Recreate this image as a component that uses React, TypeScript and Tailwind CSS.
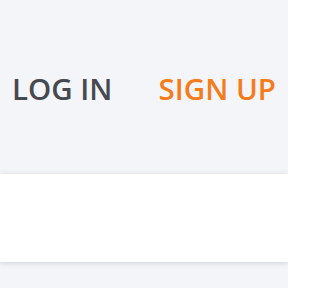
import React from "react";

export default function App() {
  return (
    <div className="w-[288px] h-[288px] bg-[#f4f5f9] overflow-hidden" style={{ fontFamily: '"Open Sans", sans-serif' }}>
      <div className="h-[174px] flex items-center justify-between px-3 pt-[3px]">
        <span className="text-[29.5px] leading-none font-semibold text-[#464950]">LOG IN</span>
        <span className="text-[29.5px] leading-none font-semibold text-[#f57c1b]">SIGN UP</span>
      </div>
      <div className="h-[88px] bg-white shadow-[0_1px_6px_rgba(0,0,0,0.15)]"></div>
    </div>
  );
}
